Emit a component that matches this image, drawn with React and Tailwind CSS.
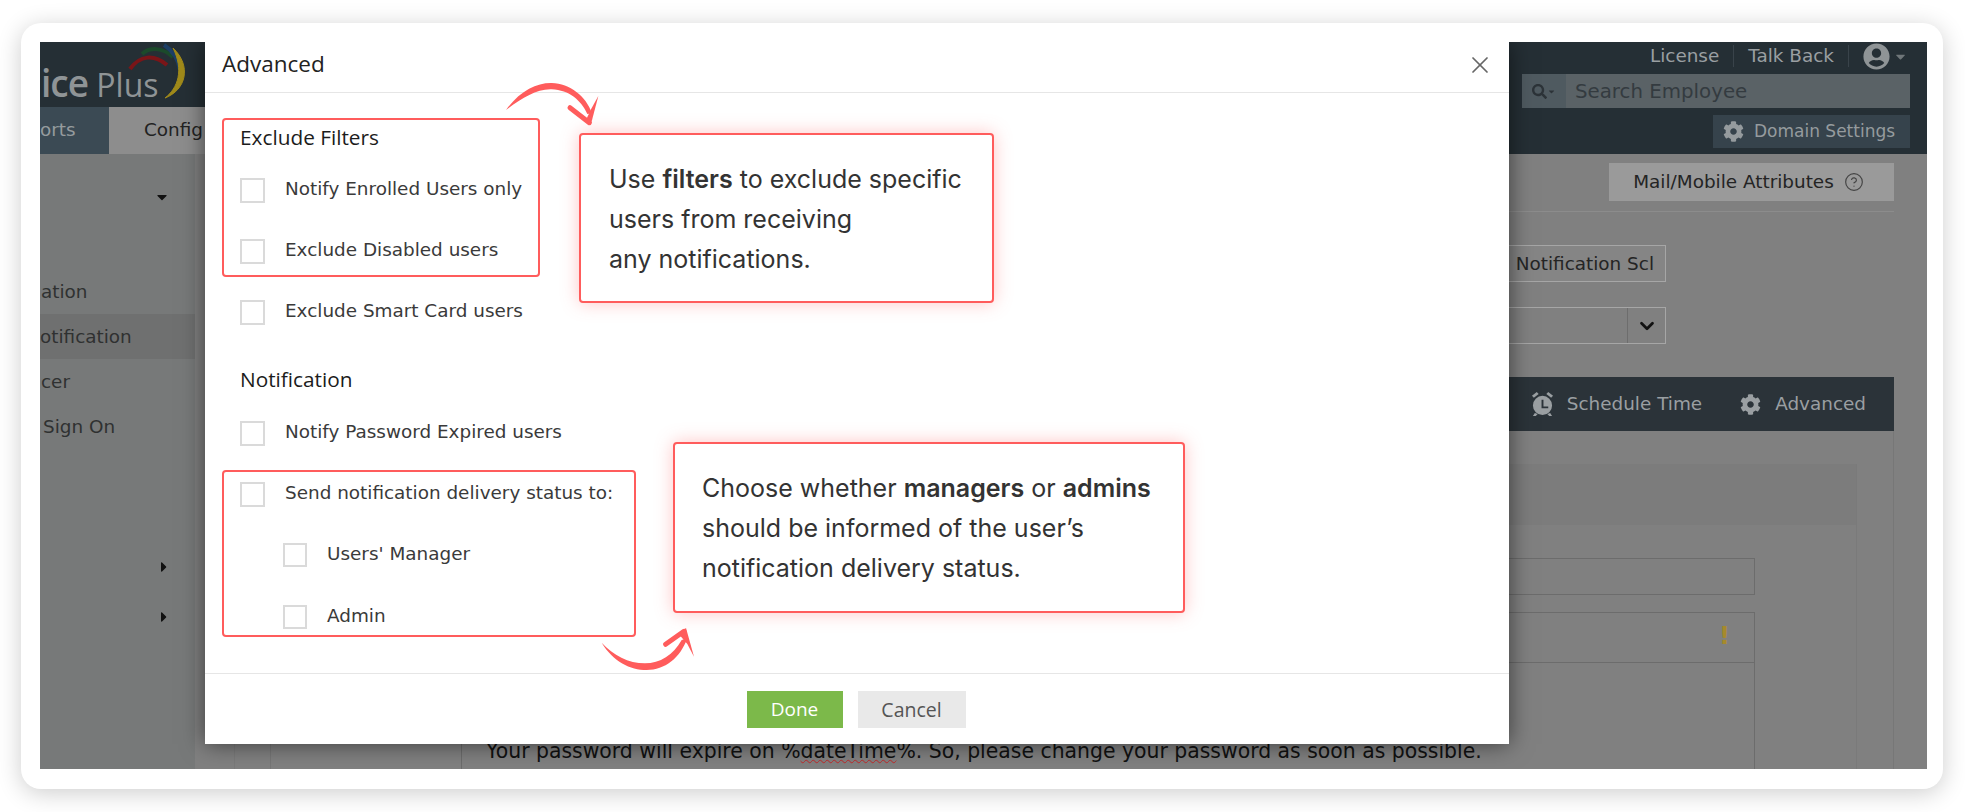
import React from 'react';
import { X, ChevronDown, CircleHelp } from 'lucide-react';
import { FaCog, FaUserCircle, FaSearch, FaCaretDown, FaCaretRight } from 'react-icons/fa';

// checkbox row used all over the dialog
const CheckRow = ({ label, small }) => (
  <div className={`flex items-start ${small ? 'gap-[20px]' : 'gap-[20px]'}`}>
    <div className={`${small ? 'w-[24px] h-[24px]' : 'w-[25px] h-[25px]'} shrink-0 bg-white border-2 border-[#dadada]`}></div>
    <span className="font-['DejaVu_Sans',sans-serif] text-[18.4px] leading-[22px] text-[#3a3a3a] whitespace-nowrap">{label}</span>
  </div>
);

const CurlyArrowOne = () => (
  <svg className="absolute left-[275px] top-[28px]" width="140" height="70" viewBox="0 0 420 210">
    <path d="M78 120 C120 62 170 38 215 39 C270 41 318 78 336 130 L322 132 C304 92 268 60 215 58 C170 56 125 85 78 120 Z" fill="#ff5c5c" />
    <path d="M270 113 L328 158" stroke="#ff5c5c" strokeWidth="15" strokeLinecap="round" fill="none" />
    <path d="M332 166 L355 78 L333 118 L318 150 Z" fill="#ff5c5c" />
  </svg>
);

const CurlyArrowTwo = () => (
  <svg className="absolute left-[375px] top-[578px]" width="140" height="70" viewBox="0 0 420 210">
    <path d="M65 68 C100 125 150 150 200 150 C255 150 300 115 322 55 L305 60 C280 105 240 130 195 130 C145 130 100 105 65 68 Z" fill="#ff5c5c" />
    <path d="M257 73 L312 34" stroke="#ff5c5c" strokeWidth="15" strokeLinecap="round" fill="none" />
    <path d="M318 24 L342 110 L322 72 L296 42 Z" fill="#ff5c5c" />
  </svg>
);

const Dialog = () => (
  <div className="absolute left-[165px] top-0 w-[1304px] h-[702px] bg-white flex flex-col shadow-[0_0_22px_rgba(0,0,0,0.55)]">
    <div className="h-[51px] shrink-0 border-b border-[#e6e6e6] flex items-center justify-between pl-[17px] pr-[15px]">
      <span className="font-['Open_Sans',sans-serif] text-[22.5px] text-[#222] pb-[6px]">Advanced</span>
      <X size={28} strokeWidth={1.5} className="text-[#666] mb-[4px]" />
    </div>

    <div className="flex-1 pl-[17px] pt-[25px]">
      <div className="w-[318px] h-[159px] border-2 border-[#ff5c5c] rounded-[4px] pl-[16px] pt-[5px]">
        <div className="font-['Open_Sans',sans-serif] font-medium text-[20.8px] leading-[24px] text-[#1c1c1c] mb-[29px]">Exclude Filters</div>
        <CheckRow label="Notify Enrolled Users only" />
        <div className="mt-[36px]"><CheckRow label="Exclude Disabled users" /></div>
      </div>
      <div className="ml-[18px] mt-[23px]"><CheckRow label="Exclude Smart Card users" /></div>
      <div className="ml-[18px] mt-[42px] font-['Open_Sans',sans-serif] font-medium text-[20.8px] leading-[24px] text-[#1c1c1c]">Notification</div>
      <div className="ml-[18px] mt-[30px]"><CheckRow label="Notify Password Expired users" /></div>
      <div className="w-[414px] h-[167px] mt-[24px] border-2 border-[#ff5c5c] rounded-[4px] pl-[16px] pt-[10px]">
        <CheckRow label="Send notification delivery status to:" />
        <div className="ml-[43px] mt-[36px]"><CheckRow small label="Users' Manager" /></div>
        <div className="ml-[43px] mt-[38px]"><CheckRow small label="Admin" /></div>
      </div>
    </div>

    <div className="h-[71px] shrink-0 border-t border-[#e6e6e6] flex justify-center items-start pt-[17px] pr-[2px] gap-[15px]">
      <button className="w-[96px] h-[37px] bg-[#7cb94a] text-white font-['Open_Sans',sans-serif] text-[19px]">Done</button>
      <button className="w-[108px] h-[37px] bg-[#e9e9e9] text-[#555] font-['Open_Sans',sans-serif] text-[19.5px]">Cancel</button>
    </div>

    {/* callouts sit on top of the dialog */}
    <div className="absolute left-[374px] top-[91px] w-[415px] h-[170px] bg-white border-2 border-[#ff5c5c] rounded-[4px] pl-[28px] pt-[24px] shadow-[0_0_18px_rgba(255,92,92,0.35)] font-['Inter',sans-serif] text-[25px] leading-[40px] text-[#333]">
      <div>Use <b className="font-semibold">filters</b> to exclude specific</div>
      <div>users from receiving</div>
      <div>any notifications.</div>
    </div>
    <div className="absolute left-[468px] top-[400px] w-[512px] h-[171px] bg-white border-2 border-[#ff5c5c] rounded-[4px] pl-[27px] pt-[24px] shadow-[0_0_18px_rgba(255,92,92,0.35)] font-['Inter',sans-serif] text-[25px] leading-[40px] text-[#333]">
      <div>Choose whether <b className="font-semibold">managers</b> or <b className="font-semibold">admins</b></div>
      <div>should be informed of the user’s</div>
      <div>notification delivery status.</div>
    </div>
    <CurlyArrowOne />
    <CurlyArrowTwo />
  </div>
);

const Backdrop = () => (
  <div className="h-full flex flex-col bg-[#808080] font-['DejaVu_Sans',sans-serif] text-[18.4px]">
    {/* top bar */}
    <div className="h-[112px] shrink-0 bg-[#252f35] flex justify-between">
      <div className="w-[165px] flex flex-col">
        <div className="relative h-[65px] overflow-hidden">
          <div className="pt-[20px] pl-[1px] font-['Open_Sans',sans-serif] leading-[42px] text-[#8f9496] whitespace-nowrap">
            <span className="text-[37px] font-semibold tracking-[-1px]">ice</span>
            <span className="text-[32px] font-medium"> Plus</span>
          </div>
          <svg className="absolute left-[80px] top-0" width="70" height="60" viewBox="0 0 70 60" fill="none">
            <path d="M10 27 C20 13 34 12 47 23" stroke="#7a1518" strokeWidth="4" />
            <path d="M22 12 C30 5 42 5 53 15" stroke="#1b4a2b" strokeWidth="4" />
            <path d="M44 3 C52 8 58 16 60 28" stroke="#1c3f66" strokeWidth="4" />
            <path d="M53 6 C72 24 66 48 45 56 C58 46 64 28 53 6 Z" fill="#a08a1a" stroke="#a08a1a" strokeWidth="1" />
          </svg>
        </div>
        <div className="h-[47px] flex">
          <div className="w-[69px] bg-[#3b4a54] flex items-center pb-[2px] text-[#959b9e]">orts</div>
          <div className="flex-1 bg-[#8d8d8d] pl-[35px] pb-[2px] flex items-center text-[#222] overflow-hidden">Config</div>
        </div>
      </div>
      <div className="w-[388px] mr-[17px] flex flex-col items-end">
        <div className="h-[32px] flex items-center text-[#9a9fa2] pr-[2px] pb-[4px]">
          <span>License</span>
          <span className="w-px h-[22px] bg-[#39434a] mx-[14px]"></span>
          <span>Talk Back</span>
          <span className="w-px h-[22px] bg-[#39434a] mx-[14px]"></span>
          <FaUserCircle size={27} className="text-[#8f9496]" />
          <FaCaretDown size={15} className="text-[#6f7679] ml-[3px]" />
        </div>
        <div className="w-full h-[34px] flex bg-[#5a6266] text-[#343b40]">
          <div className="w-[44px] bg-[#4f5a60] flex items-center justify-center text-[#2c3338]">
            <FaSearch size={15} /><FaCaretDown size={9} />
          </div>
          <span className="pl-[9px] leading-[36px] text-[19.8px]">Search Employee</span>
        </div>
        <div className="w-[197px] h-[33px] mt-[7px] bg-[#36434c] flex items-center pl-[10px] gap-[10px] text-[#959b9e] text-[17px]">
          <FaCog size={21} />
          <span className="whitespace-nowrap">Domain Settings</span>
        </div>
      </div>
    </div>

    <div className="flex-1 flex min-h-0">
      {/* left menu */}
      <div className="w-[155px] shrink-0 bg-[#777979] relative text-[#2f3131] overflow-hidden">
        <FaCaretDown size={16} className="absolute left-[114px] top-[35px] text-[#111]" />
        <div className="pt-[115px]">
          <div className="h-[45px] leading-[45px] pl-[1px] overflow-hidden">ation</div>
          <div className="h-[45px] leading-[45px] bg-[#6f7070]">otification</div>
          <div className="h-[45px] leading-[45px] pl-[1px]">cer</div>
          <div className="h-[45px] leading-[45px] pl-[3px]">Sign On</div>
        </div>
        <FaCaretRight size={16} className="absolute left-[116px] top-[405px] text-[#111]" />
        <FaCaretRight size={16} className="absolute left-[116px] top-[455px] text-[#111]" />
      </div>

      {/* main page */}
      <div className="flex-1 min-w-0 pl-[39px] pr-[33px] text-[#242424]">
        <div className="h-[47px] flex justify-end items-end">
          <div className="w-[285px] h-[38px] bg-[#9a9a9a] flex items-center justify-center gap-[10px] pr-[6px] whitespace-nowrap">
            <span>Mail/Mobile Attributes</span>
            <CircleHelp size={20} strokeWidth={1.4} className="text-[#444]" />
          </div>
        </div>
        <div className="h-[11px] border-b border-[#8c8c8c]"></div>
        <div className="mt-[33px] mr-[228px] ml-auto w-[300px] h-[37px] border border-[#a6a6a6] bg-[#858585] flex items-center justify-end pr-[11px] overflow-hidden">
          <span className="whitespace-nowrap">Notification Scl</span>
        </div>
        <div className="mt-[25px] mr-[228px] ml-auto w-[300px] h-[37px] border border-[#a6a6a6] flex justify-end">
          <div className="w-[38px] h-full border-l border-[#6d6d6d] flex items-center justify-center">
            <ChevronDown size={22} strokeWidth={3} className="text-[#111]" />
          </div>
        </div>
        <div className="mt-[33px] h-[54px] bg-[#2b3339] flex items-center justify-end pr-[28px] text-[#9a9fa2] whitespace-nowrap">
          <svg width="23" height="26" viewBox="0 0 24 27" fill="currentColor" className="mr-[13px]">
            <path d="M12 5a10 10 0 1 0 0 20 10 10 0 0 0 0-20zm-1 4h2v7h5v2h-7z" fillRule="evenodd" />
            <path d="M1 5l5-4 2 2-5 4zM23 5l-5-4-2 2 5 4zM4 23l-2 3h3l2-2zM20 23l2 3h-3l-2-2z" />
          </svg>
          <span>Schedule Time</span>
          <FaCog size={21} className="ml-[38px] mr-[14px]" />
          <span>Advanced</span>
        </div>
        <div className="h-[400px] border-r border-[#777] pt-[33px]">
          <div className="mr-[36px] h-[400px] border-l border-r border-[#7a7a7a]">
            <div className="h-[61px] bg-[#7c7c7c]"></div>
            <div className="ml-[35px] h-[300px] border-l border-[#767676] pt-[33px] pr-[101px]">
              <div className="ml-[190px] h-[37px] border border-[#6c6c6c]"></div>
              <div className="ml-[190px] mt-[17px] h-[300px] border-l border-t border-r border-[#6c6c6c]">
                <div className="h-[50px] border-b border-[#6c6c6c] flex justify-end pr-[24px] pt-[8px]">
                  <span className="text-[#a68a2c] font-bold text-[24px] leading-[30px]">!</span>
                </div>
                <div className="pl-[24px] pt-[76px] text-[20.4px] leading-[24px] text-[#111] whitespace-nowrap">
                  Your password will expire on %<span className="underline decoration-wavy decoration-[#c0282a] decoration-1">dateTime</span>%. So, please change your password as soon as possible.
                </div>
              </div>
            </div>
          </div>
        </div>
      </div>
    </div>
  </div>
);

export default function App() {
  return (
    <div className="w-[1965px] h-[812px] bg-white overflow-hidden pl-[21px] pt-[23px]">
      <div className="w-[1922px] h-[766px] bg-white rounded-[20px] shadow-[0_4px_24px_rgba(0,0,0,0.2)] pl-[19px] pr-[16px] pt-[19px] pb-[20px]">
        <div className="relative h-full overflow-hidden">
          <Backdrop />
          <Dialog />
        </div>
      </div>
    </div>
  );
}
